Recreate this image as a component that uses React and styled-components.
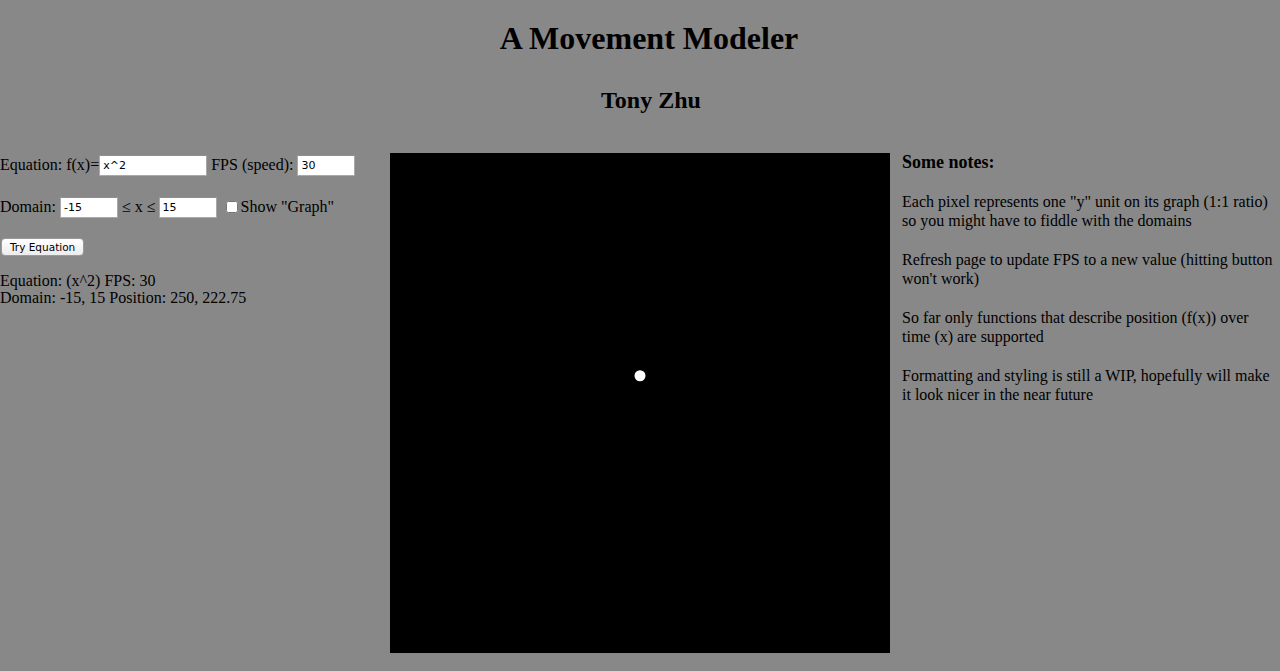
import React from "react";
import styled, { createGlobalStyle } from "styled-components";

const GlobalStyle = createGlobalStyle`
  html, body {
    margin: 0;
    padding: 0;
    background: #888888;
  }
  body {
    font-family: "Liberation Serif", "Times New Roman", serif;
    font-size: 16px;
    color: #000;
  }
`;

const Page = styled.div`
  width: 1280px;
  min-height: 671px;
`;

const Title = styled.h1`
  margin: 0;
  padding: 20px 0 0 18px;
  text-align: center;
  font-size: 32px;
  line-height: 37px;
  font-weight: bold;
`;

const Author = styled.h2`
  margin: 0;
  padding: 29px 0 0 22px;
  text-align: center;
  font-size: 24px;
  line-height: 28px;
  font-weight: bold;
`;

const Main = styled.div`
  display: flex;
  align-items: flex-start;
  margin-top: 39px;
`;

const Controls = styled.div`
  width: 390px;
  flex-shrink: 0;
`;

const Row = styled.div`
  display: flex;
  align-items: center;
  height: 24px;
  margin-bottom: ${(p) => p.gap || 18}px;
  white-space: nowrap;
`;

const Label = styled.span`
  margin-right: ${(p) => p.space || 0}px;
  margin-left: ${(p) => p.lead || 0}px;
`;

const TextInput = styled.input`
  box-sizing: border-box;
  width: ${(p) => p.w}px;
  height: 21px;
  padding: 1px 3px;
  border: 1px solid #a9a9a9;
  border-top-color: #8e8e8e;
  background: #fff;
  font-family: "DejaVu Sans", "Liberation Sans", sans-serif;
  font-size: 11px;
  color: #000;
  outline: none;
`;

const Check = styled.input`
  width: 12px;
  height: 12px;
  margin: 0 3px 0 9px;
`;

const TryButton = styled.button`
  margin: 1px 0 0 1px;
  height: 18px;
  padding: 0 8px;
  border: 1px solid #9a9a9a;
  border-radius: 4px;
  background: linear-gradient(#ffffff, #ececec);
  font-family: "DejaVu Sans", "Liberation Sans", sans-serif;
  font-size: 10.5px;
  color: #000;
`;

const Output = styled.div`
  margin-top: 16px;
  line-height: 17px;
`;

const Canvas = styled.div`
  width: 500px;
  height: 500px;
  flex-shrink: 0;
  background: #000;
`;

const Notes = styled.div`
  margin-left: 12px;
  width: 378px;
`;

const NotesTitle = styled.h3`
  margin: 0 0 21px;
  font-size: 18px;
  line-height: 18px;
  font-weight: bold;
`;

const Note = styled.p`
  margin: 0 0 20px;
  line-height: 19px;
`;

const notes = [
  'Each pixel represents one "y" unit on its graph (1:1 ratio) so you might have to fiddle with the domains',
  "Refresh page to update FPS to a new value (hitting button won't work)",
  "So far only functions that describe position (f(x)) over time (x) are supported",
  "Formatting and styling is still a WIP, hopefully will make it look nicer in the near future",
];

export default function App() {
  return (
    <Page>
      <GlobalStyle />
      <Title>A Movement Modeler</Title>
      <Author>Tony Zhu</Author>
      <Main>
        <Controls>
          <Row>
            <Label>Equation: f(x)=</Label>
            <TextInput w={108} defaultValue="x^2" />
            <Label lead={4} space={4}>FPS (speed):</Label>
            <TextInput w={58} defaultValue="30" />
          </Row>
          <Row>
            <Label space={4}>Domain:</Label>
            <TextInput w={58} defaultValue="-15" />
            <Label lead={4} space={3}>≤ x ≤</Label>
            <TextInput w={58} defaultValue="15" />
            <Check type="checkbox" />
            <Label>Show "Graph"</Label>
          </Row>
          <TryButton>Try Equation</TryButton>
          <Output>
            Equation: (x^2) FPS: 30
            <br />
            Domain: -15, 15 Position: 250, 222.75
          </Output>
        </Controls>
        <Canvas>
          <svg width="500" height="500" viewBox="0 0 500 500">
            <circle cx="250" cy="222.75" r="5.5" fill="#fff" />
          </svg>
        </Canvas>
        <Notes>
          <NotesTitle>Some notes:</NotesTitle>
          {notes.map((n) => (
            <Note key={n}>{n}</Note>
          ))}
        </Notes>
      </Main>
    </Page>
  );
}
